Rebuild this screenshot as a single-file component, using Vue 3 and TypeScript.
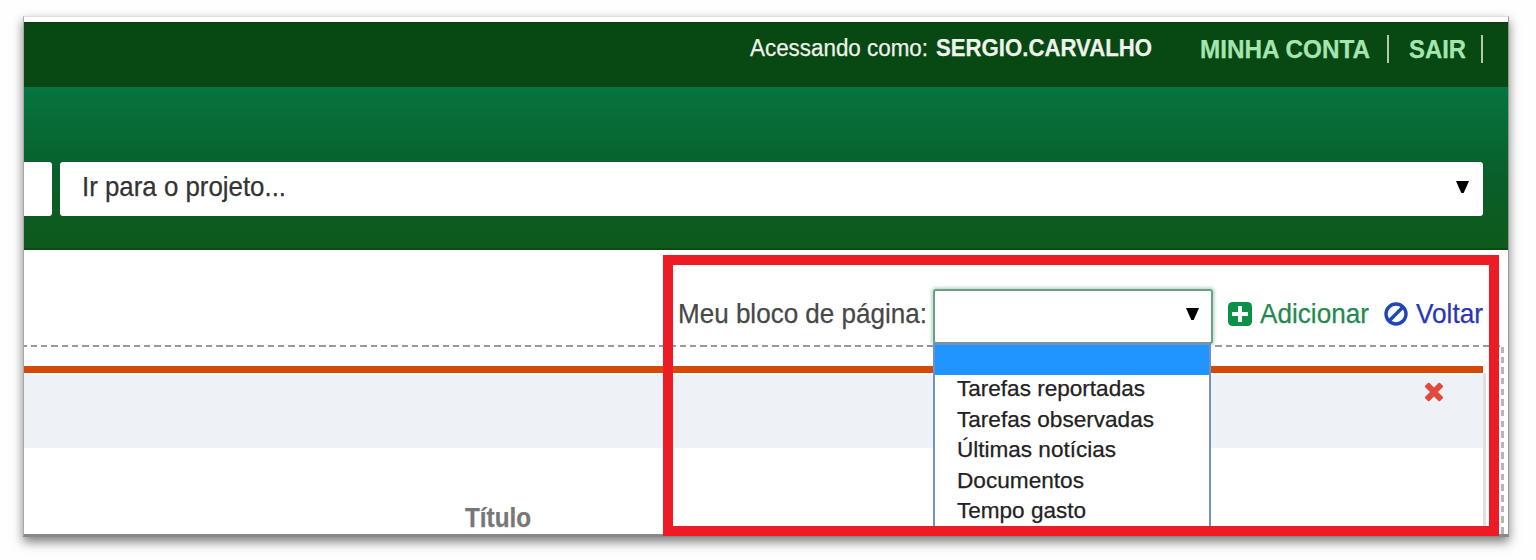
<script setup lang="ts">
import { ref } from 'vue'

interface Option {
  label: string
  width: number
}

const options = ref<Option[]>([
  { label: 'Tarefas reportadas', width: 188 },
  { label: 'Tarefas observadas', width: 197 },
  { label: 'Últimas notícias', width: 159 },
  { label: 'Documentos', width: 127 },
  { label: 'Tempo gasto', width: 129 },
])

// Condenses or widens a label so that it fills the given width exactly.
const vFit = {
  mounted(el: HTMLElement, binding: { value: number }) {
    const natural = el.getBoundingClientRect().width
    el.style.transform = `scaleX(${binding.value / natural})`
    el.style.marginRight = `${binding.value - natural}px`
  },
}
</script>

<template>
  <div class="stage">
    <div class="frame">
      <div class="top-menu">
        <span class="logged"><span v-fit="178" class="fit">Acessando como:</span></span>
        <strong class="user"><span v-fit="216" class="fit">SERGIO.CARVALHO</span></strong>
        <a class="link account"><span v-fit="170" class="fit">MINHA CONTA</span></a>
        <i class="bar"></i>
        <a class="link exit"><span v-fit="57" class="fit">SAIR</span></a>
        <i class="bar"></i>
      </div>

      <header class="header">
        <div class="search"></div>
        <div class="jump">
          <span v-fit="204" class="fit">Ir para o projeto...</span>
          <svg class="arrow" viewBox="0 0 13 12"><path d="M0 0H13L7.7 12H5.3Z" /></svg>
        </div>
      </header>

      <main class="content">
        <div class="actions">
          <span class="caption"><span v-fit="249" class="fit">Meu bloco de página:</span></span>
          <div class="select">
            <svg class="arrow" viewBox="0 0 13 12"><path d="M0 0H13L7.7 12H5.3Z" /></svg>
            <ul class="menu">
              <li class="blank"></li>
              <li v-for="option in options" :key="option.label">
                <span v-fit="option.width" class="fit">{{ option.label }}</span>
              </li>
            </ul>
          </div>
          <svg class="icon plus" viewBox="0 0 24 24">
            <rect width="24" height="24" rx="4.5" fill="#0b9048" />
            <path d="M12 4V20M4 12H20" stroke="#fff" stroke-width="4" />
          </svg>
          <a class="add"><span v-fit="109" class="fit">Adicionar</span></a>
          <svg class="icon ban" viewBox="0 0 24 24" fill="none" stroke="#1f46b8" stroke-width="3.4">
            <circle cx="12" cy="12" r="10" />
            <path d="M4.8 19.2L19.2 4.8" />
          </svg>
          <a class="back"><span v-fit="67" class="fit">Voltar</span></a>
        </div>

        <div class="dash-row"></div>
        <div class="lower">
          <section class="block">
            <div class="block-head">
              <svg class="close" viewBox="0 0 20 20">
                <path
                  d="M5.5 1L10 5.5L14.5 1Q15.3 .4 16.1 1L18.8 3.7Q19.5 4.5 18.8 5.3L14 10L18.8 14.7Q19.5 15.5 18.8 16.3L16.1 19Q15.3 19.6 14.5 19L10 14.5L5.5 19Q4.7 19.6 3.9 19L1.2 16.3Q.5 15.5 1.2 14.7L6 10L1.2 5.3Q.5 4.5 1.2 3.7L3.9 1Q4.7 .4 5.5 1Z"
                  fill="#e04b3b"
                />
              </svg>
            </div>
            <div class="column"><span v-fit="66" class="fit">Título</span></div>
          </section>
          <div class="dash-column"></div>
        </div>
      </main>
      <div class="edge"></div>
      <div class="highlight"></div>
    </div>
  </div>
</template>

<style>
body {
  margin: 0;
  background: #fefefe;
}
</style>

<style scoped>
* {
  box-sizing: border-box;
}
.stage {
  width: 1536px;
  height: 560px;
  padding: 16px 27px 23px 23px;
  overflow: hidden;
  background: #fefefe;
  font-family: "Liberation Sans", Arial, sans-serif;
}
.frame {
  position: relative;
  width: 1486px;
  height: 521px;
  padding: 6px 1px 1px;
  background: #fff;
  box-shadow: 0 5px 10px rgba(0, 0, 0, 0.5);
}
.fit {
  display: inline-block;
  white-space: pre;
  transform-origin: 0 50%;
  -webkit-text-stroke: 0.25px currentColor;
}
.top-menu {
  display: flex;
  height: 65px;
  padding-right: 25px;
  justify-content: flex-end;
  background: #084812;
  border-top: 1px solid #16301a;
  line-height: 30px;
  white-space: nowrap;
  color: #eef3ec;
}
.logged,
.user {
  padding-top: 10px;
  font-size: 23px;
}
.logged {
  width: 186px;
}
.user {
  width: 264px;
}
.link {
  padding-top: 11px;
  font-size: 25.5px;
  font-weight: bold;
  color: #a5e6b0;
}
.account {
  width: 187px;
}
.exit {
  width: 92px;
  padding-left: 20px;
}
.bar {
  width: 2px;
  height: 28px;
  margin-top: 12px;
  background: #b4c8ad;
}
.header {
  display: flex;
  gap: 8px;
  height: 163px;
  padding: 75px 25px 0 0;
  background: linear-gradient(#05753f, #095f2a 55%, #0f591c);
  border-bottom: 2px solid #0b4b13;
}
.search {
  width: 28px;
  height: 54px;
  background: #fff;
  border-radius: 0 3px 3px 0;
}
.jump {
  display: flex;
  flex: 1;
  justify-content: space-between;
  height: 54px;
  padding: 9px 14px 0 22px;
  background: #fff;
  border-radius: 3px;
  font-size: 28.5px;
  line-height: 30px;
  color: #333;
}
.arrow {
  width: 13px;
  height: 12px;
  margin-top: 10px;
}
.content {
  height: 285px;
  overflow: hidden;
  background: #fff;
}
.actions {
  display: flex;
  height: 95px;
  padding: 39px 0 0 654px;
  font-size: 28.5px;
  line-height: 30px;
  color: #484848;
  white-space: nowrap;
}
.caption {
  width: 255px;
  padding-top: 9px;
}
.select {
  position: relative;
  display: flex;
  flex: none;
  justify-content: flex-end;
  width: 280px;
  height: 55px;
  padding: 7px 12px 0 0;
  background: #fff;
  border: 2px solid #6ba085;
  border-radius: 3px;
  box-shadow: 0 0 3px 2px rgba(60, 150, 100, 0.3);
}
.menu {
  position: absolute;
  top: 52px;
  left: -2px;
  width: 278px;
  height: 194px;
  margin: 0;
  padding: 0;
  list-style: none;
  background: #fff;
  border: 2px solid #7090c8;
  font-size: 22.7px;
  color: #222;
}
.menu li {
  height: 30.6px;
  padding-left: 22px;
  line-height: 27.6px;
}
.menu .blank {
  height: 30px;
  background: #2094ff;
}
.icon {
  flex: none;
  width: 24px;
  height: 24px;
  margin-top: 13px;
}
.plus {
  margin-left: 15px;
}
.add {
  width: 133px;
  padding: 9px 0 0 8px;
  color: #1f8a4e;
}
.ban {
  margin-left: -1px;
}
.back {
  padding: 9px 0 0 8px;
  color: #2a36b4;
}
.dash-row {
  width: 1480px;
  height: 2px;
  background: repeating-linear-gradient(90deg, #999 0 6.3px, transparent 6.3px 10.3px) -3.5px 0 / 1490px 2px;
}
.lower {
  display: flex;
  justify-content: space-between;
  height: 190px;
  padding-right: 4px;
}
.block {
  width: 1462px;
  padding-top: 19px;
  background: linear-gradient(90deg, transparent 1459px, #dedfe1 1459px) 0 26px no-repeat;
}
.block-head {
  display: flex;
  justify-content: flex-end;
  width: 1459px;
  height: 82px;
  padding: 9px 39px 0 0;
  background: linear-gradient(#fff 2px, #eef1f5 2px);
  border-top: 7px solid #d54a08;
}
.close {
  width: 20px;
  height: 20px;
}
.column {
  padding: 55px 0 0 441px;
  font-size: 27px;
  font-weight: bold;
  line-height: 30px;
  color: #777;
}
.dash-column {
  width: 3px;
  background: repeating-linear-gradient(#b5b5b5 0 6.5px, transparent 6.5px 10.65px) 0 -1px / 3px 200px;
}
.edge {
  position: absolute;
  z-index: 1;
  inset: 0;
  border: solid;
  border-width: 1px 1px 3px;
  border-color: #dedede #999 #888 #aaa;
}
.highlight {
  position: absolute;
  z-index: 2;
  top: 239px;
  left: 640px;
  width: 836px;
  height: 281px;
  border: 10px solid #ed1c24;
}
</style>
